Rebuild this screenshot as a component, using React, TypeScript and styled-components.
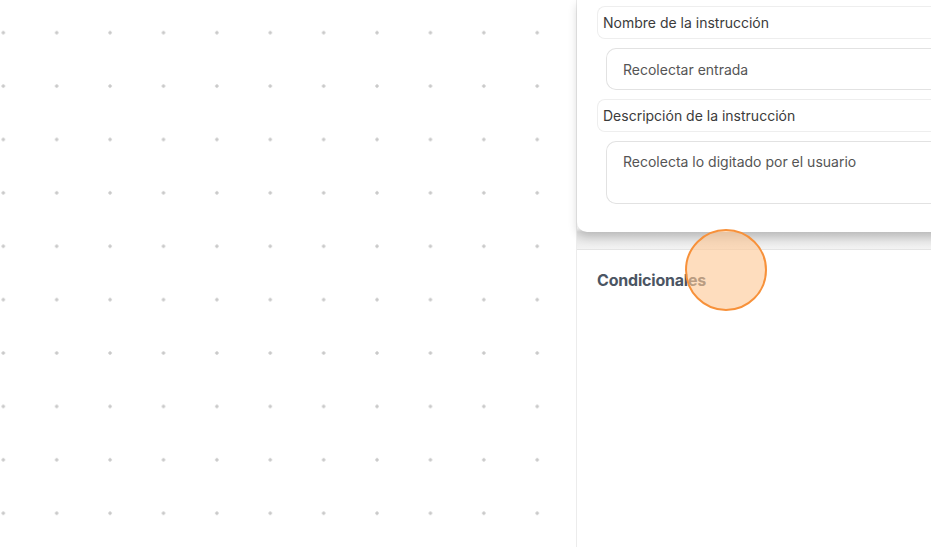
import styled, { createGlobalStyle } from 'styled-components'

const GlobalStyle = createGlobalStyle`
  html, body {
    margin: 0;
    padding: 0;
    background: #ffffff;
    font-family: Inter, 'Noto Sans', 'Liberation Sans', sans-serif;
  }
  * {
    box-sizing: border-box;
  }
`

const Layout = styled.div`
  position: relative;
  display: flex;
  width: 100vw;
  height: 100vh;
  overflow: hidden;
`

const Canvas = styled.div`
  width: 577px;
  flex-shrink: 0;
  border-right: 1px solid #ececec;
  background-color: #ffffff;
  background-image: radial-gradient(circle, #c9c9c9 1.4px, transparent 1.9px);
  background-size: 53.4px 53.4px;
  background-position: -23.4px 6px;
`

const Panel = styled.aside`
  width: 440px;
  flex-shrink: 0;
  display: flex;
  flex-direction: column;
  background: #ffffff;
`

const TopSection = styled.div`
  padding-bottom: 17px;
  border-bottom: 1px solid #e4e4e4;
  background: linear-gradient(#ffffff 0, #ffffff 228px, #dedede 232px, #f3f3f3 100%);
`

const Card = styled.div`
  display: flex;
  flex-direction: column;
  padding: 6px 0 28px 20px;
  background: #ffffff;
  border-radius: 0 0 0 10px;
  box-shadow: 0 5px 10px rgba(0, 0, 0, 0.16);
`

const FieldLabel = styled.div<{ $gap?: number }>`
  display: flex;
  align-items: center;
  height: 33px;
  margin-top: ${(p) => p.$gap ?? 0}px;
  padding-left: 5px;
  border: 1px solid #eeeeee;
  border-right: none;
  border-radius: 8px 0 0 8px;
  font-size: 14px;
  color: #3b3b3b;
`

const Input = styled.div<{ $tall?: boolean }>`
  display: flex;
  align-items: ${(p) => (p.$tall ? 'flex-start' : 'center')};
  height: ${(p) => (p.$tall ? 63 : 42)}px;
  margin: 9px 0 0 9px;
  padding: ${(p) => (p.$tall ? '11px 0 0 16px' : '0 0 0 16px')};
  border: 1px solid #e2e2e2;
  border-right: none;
  border-radius: 10px 0 0 10px;
  font-size: 14px;
  color: #555555;
`

const Section = styled.section`
  padding: 20px 0 0 20px;
`

const SectionTitle = styled.h3`
  margin: 0;
  font-size: 16px;
  font-weight: 700;
  color: #4b5563;
  letter-spacing: -0.2px;
`

const Pointer = styled.div`
  position: absolute;
  left: 685px;
  top: 229px;
  width: 82px;
  height: 82px;
  border-radius: 50%;
  background: rgba(253, 200, 150, 0.62);
  border: 2px solid #f7913a;
  pointer-events: none;
`

function App() {
  return (
    <>
      <GlobalStyle />
      <Layout>
        <Canvas />
        <Panel>
          <TopSection>
            <Card>
              <FieldLabel>Nombre de la instrucción</FieldLabel>
              <Input>Recolectar entrada</Input>
              <FieldLabel $gap={9}>Descripción de la instrucción</FieldLabel>
              <Input $tall>Recolecta lo digitado por el usuario</Input>
            </Card>
          </TopSection>
          <Section>
            <SectionTitle>Condicionales</SectionTitle>
          </Section>
        </Panel>
        <Pointer />
      </Layout>
    </>
  )
}

export default App
